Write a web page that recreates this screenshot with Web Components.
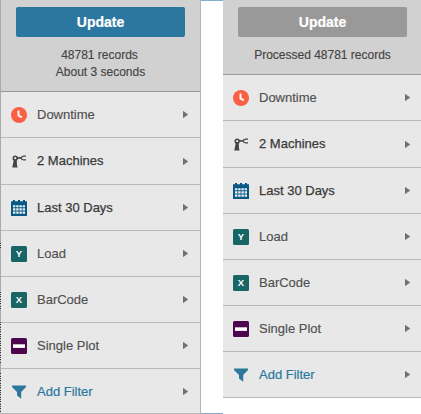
<!DOCTYPE html>
<html lang="en"><head><meta charset="utf-8"><title>Filters</title>
<style>
body{margin:0;background:#fff;font-family:"Liberation Sans",Arial,sans-serif;overflow:hidden}
</style></head><body>
<filter-board></filter-board>
<script>
const icons={
clock:'<circle cx="8" cy="8" r="8" fill="#fa6144"/><path d="M7.5 3.6v4.9l3.3 1.9" fill="none" stroke="#fff" stroke-width="1.9"/>',
robot:'<g transform="translate(0 1.6)"><g fill="none" stroke="#444"><circle cx="4.2" cy="3.6" r="1.9" stroke-width="1.5"/><path d="M5.9 3.3h4" stroke-width="1.7"/><path d="M15 1.5h-2.4Q10.5 1.6 10.2 3.4 10.5 5.2 12.6 5.3H15" stroke-width="1.3"/></g><path d="M2.8 5.2h2.9l.3 5.5.6 2.1H1.2l.5-2z" fill="#444"/></g>',
calendar:'<path d="M0 1.2h2V0h2v1.2h3V0h2v1.2h3V0h2v1.2h2V16H0z" fill="#085a85"/><path d="M2 5.2h2.4v2.1H2zm3.2 0h2.4v2.1H5.2zm3.2 0h2.4v2.1H8.4zm3.2 0H14v2.1h-2.4zM2 8.3h2.4v2.2H2zm3.2 0h2.4v2.2H5.2zm3.2 0h2.4v2.2H8.4zm3.2 0H14v2.2h-2.4zM2 11.5h2.4v2.2H2zm3.2 0h2.4v2.2H5.2zm3.2 0h2.4v2.2H8.4zm3.2 0H14v2.2h-2.4z" fill="#e8f0f2"/>',
y:'<rect width="16" height="16" rx="1.5" fill="#176565"/><text x="8" y="11.4" text-anchor="middle" font-size="9.5" font-weight="700" fill="#fff">Y</text>',
x:'<rect width="16" height="16" rx="1.5" fill="#176565"/><text x="8" y="11.4" text-anchor="middle" font-size="9.5" font-weight="700" fill="#fff">X</text>',
plot:'<rect width="16" height="16" rx="1.5" fill="#4b064d"/><path d="M2 6.3h12v3.6H2z" fill="#fff"/>',
funnel:'<path d="M1 1.6h14v1.3L10.2 8v6.7L6 11.5V8L1 2.9z" fill="#2c789d"/>'};
customElements.define('filter-icon',class extends HTMLElement{
connectedCallback(){this.attachShadow({mode:'open'}).innerHTML=`<style>:host{display:block;width:16px;height:16px;flex:none}svg{display:block}</style><svg width="16" height="16" viewBox="0 0 16 16">${icons[this.getAttribute('name')]}</svg>`}});
customElements.define('filter-row',class extends HTMLElement{
connectedCallback(){this.attachShadow({mode:'open'}).innerHTML=`<style>
:host{display:flex;align-items:center;box-sizing:border-box;height:46px;flex:none;padding:0 var(--row-end,12px) 0 10px;gap:10px;border-bottom:1px solid #b9b9b9;color:#505050;font-size:13px;line-height:16px;background:#e8e8e8;-webkit-text-stroke:.15px #505050}
:host([tall]){height:47px}
:host([strong]){color:#3a3a3a;-webkit-text-stroke:.25px #3a3a3a}
:host([link]){height:var(--last-height,46px);padding-top:var(--last-top,0px);color:#2c789d;-webkit-text-stroke:.2px #2c789d}
span{flex:1;white-space:nowrap}svg{display:block;flex:none}</style>
<filter-icon name="${this.getAttribute('icon')}"></filter-icon><span><slot></slot></span><svg width="5" height="7" viewBox="0 0 5 7"><path d="M0 0l5 3.5L0 7z" fill="#707070" stroke="#707070" stroke-width=".3"/></svg>`}});
customElements.define('update-header',class extends HTMLElement{
connectedCallback(){this.attachShadow({mode:'open'}).innerHTML=`<style>
:host{display:block;box-sizing:border-box;flex:none;padding:7px 15px 0;background:#d1d1d1;border-bottom:1px solid #999;text-align:center;color:#444;font-size:12px;line-height:17px;-webkit-text-stroke:.15px #444}
button{display:block;width:169px;height:30px;padding:0;margin:0 0 10px;border:0;border-radius:2px;background:#2c779f;color:#fff;font:700 14px/30px "Liberation Sans",Arial,sans-serif;-webkit-text-stroke:.2px #fff}
:host([done]) button{background:#999}
div{width:169px}</style><button>Update</button><div><slot></slot></div>`}});
customElements.define('filter-panel',class extends HTMLElement{
connectedCallback(){this.attachShadow({mode:'open'}).innerHTML=`<style>
:host{display:flex;flex-direction:column;box-sizing:border-box;background:#e8e8e8}</style>
<slot></slot>
<filter-row icon="clock">Downtime</filter-row><filter-row icon="robot" strong tall>2 Machines</filter-row><filter-row icon="calendar" strong>Last 30 Days</filter-row><filter-row icon="y">Load</filter-row><filter-row icon="x">BarCode</filter-row><filter-row icon="plot">Single Plot</filter-row><filter-row icon="funnel" link>Add Filter</filter-row>`}});
customElements.define('filter-board',class extends HTMLElement{
connectedCallback(){this.attachShadow({mode:'open'}).innerHTML=`<style>
:host{display:flex;width:421px;height:414px;align-items:flex-start;overflow:hidden}
.left{width:201px;height:414px;border-left:1px solid #aaa;border-right:1px solid #b5b5b5;--last-height:45px;--last-top:1px}
.gap{width:22px;height:414px;box-sizing:border-box;border-top:1px solid #83adc8;border-bottom:1px solid #83adc8}
.right{width:198px;flex:none;--row-end:11px}
.left update-header{height:92px}.right update-header{height:75px}
.count{padding-right:2px}
.ticks{position:absolute;left:0;top:243px;width:1px;height:170px;background:repeating-linear-gradient(#333 0 1px,#ccc 1px 2px,#444 2px 3px,#ccc 3px 4px,#333 4px 5px,#bbb 5px 7px);-webkit-mask:linear-gradient(#000 0 6px,transparent 6px 48px,#000 48px 66px,transparent 66px 78px,#000 78px 120px,transparent 120px 130px,#000 130px)}
</style><filter-panel class="left"><update-header><span class="count">48781 records</span><br>About 3 seconds</update-header></filter-panel><div class="gap"></div><filter-panel class="right"><update-header done>Processed 48781 records</update-header></filter-panel><div class="ticks"></div>`}});
</script></body></html></script>
